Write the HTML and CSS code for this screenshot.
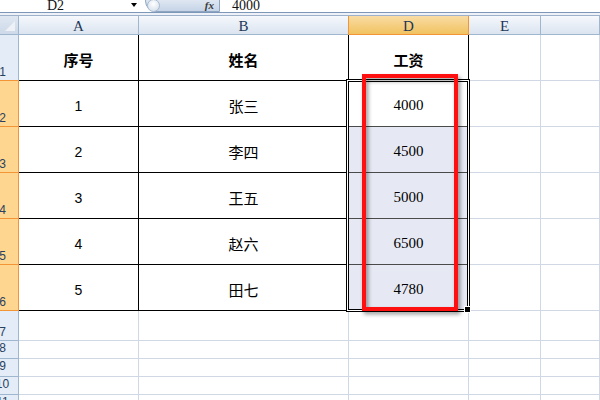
FILE: index.html
```html
<!DOCTYPE html>
<html lang="zh">
<head>
    <meta charset="UTF-8">
    <title>工资表</title>
    <link rel="stylesheet" href="styles.css">
</head>
<body>
    <div class="formula-bar">
        <div class="name-box">
            <span class="name">D2</span>
            <span class="drop"></span>
        </div>
        <div class="fx-btn">
            <span class="knob"></span>
            <span class="fx">fx</span>
        </div>
        <div class="formula">4000</div>
    </div>
    <div class="bar-gap"></div>

    <div class="sheet">
        <!-- 列标题 -->
        <div class="corner"><span class="tri"></span></div>
        <div class="ch">A</div>
        <div class="ch pre">B</div>
        <div class="ch on">D</div>
        <div class="ch">E</div>
        <div class="ch"></div>

        <!-- 第1行 表头 -->
        <div class="rh r1"><span>1</span></div>
        <div class="c t head">序号</div>
        <div class="c t head">姓名</div>
        <div class="c t head">工资</div>
        <div class="c"></div>
        <div class="c"></div>

        <div class="rh on"><span>2</span></div>
        <div class="c t num">1</div>
        <div class="c t">张三</div>
        <div class="c t d s0">4000</div>
        <div class="c"></div>
        <div class="c"></div>

        <div class="rh on"><span>3</span></div>
        <div class="c t num">2</div>
        <div class="c t">李四</div>
        <div class="c t d s">4500</div>
        <div class="c"></div>
        <div class="c"></div>

        <div class="rh on"><span>4</span></div>
        <div class="c t num">3</div>
        <div class="c t">王五</div>
        <div class="c t d s">5000</div>
        <div class="c"></div>
        <div class="c"></div>

        <div class="rh on"><span>5</span></div>
        <div class="c t num">4</div>
        <div class="c t">赵六</div>
        <div class="c t d s">6500</div>
        <div class="c"></div>
        <div class="c"></div>

        <div class="rh on"><span>6</span></div>
        <div class="c t num">5</div>
        <div class="c t">田七</div>
        <div class="c t d s last">4780</div>
        <div class="c"></div>
        <div class="c"></div>

        <!-- 空行 -->
        <div class="rh"><span>7</span></div>
        <div class="c"></div><div class="c"></div><div class="c"></div><div class="c"></div><div class="c"></div>

        <div class="rh short"><span>8</span></div>
        <div class="c"></div><div class="c"></div><div class="c"></div><div class="c"></div><div class="c"></div>

        <div class="rh short"><span>9</span></div>
        <div class="c"></div><div class="c"></div><div class="c"></div><div class="c"></div><div class="c"></div>

        <div class="rh short"><span>10</span></div>
        <div class="c"></div><div class="c"></div><div class="c"></div><div class="c"></div><div class="c"></div>

        <div class="rh short"><span>11</span></div>
        <div class="c"></div><div class="c"></div><div class="c"></div><div class="c"></div><div class="c"></div>

        <!-- 选区与标注 -->
        <div class="selection"></div>
        <div class="fill-handle"></div>
        <div class="mark"></div>
    </div>
</body>
</html>
```

FILE: styles.css
```css
* {
    box-sizing: border-box;
}
body {
    margin: 0;
    width: 600px;
    height: 400px;
    overflow: hidden;
    background-color: #fff;
    color: #000;
    font-family: "Liberation Sans", "Noto Sans CJK SC", sans-serif;
}

/* 编辑栏 */
.formula-bar {
    display: flex;
    align-items: flex-end;
    height: 13px;
    border-bottom: 1px solid #7c97b7;
    overflow: hidden;
    font-family: "Liberation Serif", serif;
    font-size: 14px;
    color: #111;
}
.name-box {
    display: flex;
    align-items: flex-end;
    width: 140px;
    height: 100%;
}
.name {
    padding-left: 47px;
    line-height: 13px;
}
.drop {
    align-self: flex-start;
    margin: 3px 3px 0 auto;
    width: 0;
    height: 0;
    border-left: 3.5px solid transparent;
    border-right: 3.5px solid transparent;
    border-top: 4px solid #000;
}
.fx-btn {
    display: flex;
    align-items: flex-end;
    flex-shrink: 0;
    margin-left: 5px;
    width: 75px;
    height: 22px;
    border: 1px solid #8ea5c2;
    border-radius: 11px 0 0 11px;
    background: linear-gradient(#f3f6fb, #c6d4e7);
}
.knob {
    width: 13px;
    height: 13px;
    margin: 0 0 -1px 1px;
    border-radius: 50%;
    border: 1px solid #a9b9ce;
    background: radial-gradient(circle at 50% 35%, #fff, #cfdbea);
}
.fx {
    margin: 0 5px 1px auto;
    font-style: italic;
    font-weight: bold;
    font-size: 11px;
    line-height: 10px;
    color: #3a3a3a;
}
.formula {
    padding-left: 12px;
    line-height: 13px;
}
.bar-gap {
    height: 2px;
    background-color: #eef2f8;
}

/* 工作表 */
.sheet {
    position: relative;
    display: grid;
    grid-template-columns: 19px 120px 210px 120px 72px 1fr;
    grid-template-rows: 19px repeat(6, 46px) 30px repeat(4, 18px);
    border-top: 1px solid #9db2ca;
}
.corner {
    display: flex;
    align-items: flex-end;
    justify-content: flex-end;
    padding: 0 3px 3px 0;
    background: linear-gradient(#dfe7f2, #cdd9e9);
    border-right: 1px solid #9eb6ce;
    border-bottom: 1px solid #9eb6ce;
}
.tri {
    width: 0;
    height: 0;
    border-left: 10px solid transparent;
    border-bottom: 10px solid #eef1f5;
}
.ch {
    display: flex;
    justify-content: center;
    align-items: center;
    padding-top: 2px;
    background: linear-gradient(#f5f8fc, #dbe4f0);
    border-right: 1px solid #9eb6ce;
    border-bottom: 1px solid #9eb6ce;
    font-family: "Liberation Serif", serif;
    font-size: 15px;
    color: #1d3856;
}
.ch.pre {
    border-right-color: #f29536;
}
.ch.on {
    background: linear-gradient(#f9dca4, #f1c260);
    border-right-color: #f29536;
    border-bottom-color: #f29536;
}
.rh {
    display: flex;
    align-items: flex-end;
    overflow: hidden;
    padding-bottom: 1px;
    background-color: #e4ecf7;
    border-right: 1px solid #9eb6ce;
    border-bottom: 1px solid #9eb6ce;
    font-size: 12px;
    color: #27415f;
}
.rh span {
    flex-shrink: 0;
    width: 36px;
    margin-left: -15.5px;
    text-align: center;
    line-height: 14px;
}
.rh.short {
    align-items: flex-start;
    padding: 0;
}
.rh.r1 {
    border-bottom-color: #f29536;
}
.rh.on {
    background-color: #fed68f;
    border-right-color: #f29536;
    border-bottom-color: #f29536;
}
.c {
    display: flex;
    justify-content: center;
    align-items: center;
    border-right: 1px solid #d0d7e5;
    border-bottom: 1px solid #d0d7e5;
    font-size: 15px;
}
.t {
    padding-top: 4px;
    border-right-color: #000;
    border-bottom-color: #000;
}
.head {
    font-weight: bold;
}
.num {
    font-size: 14px;
}
.d {
    font-family: "Liberation Serif", serif;
    font-size: 15px;
}
.s0 {
    border-bottom-color: #4a4a4a;
}
.s {
    background-color: #e6e9f4;
    border-bottom-color: #4a4a4a;
}
.s.last {
    border-bottom-color: #000;
}

/* 选区框 */
.selection {
    position: absolute;
    left: 346px;
    top: 63px;
    width: 124px;
    height: 233px;
    border: 1px solid #000;
    box-shadow: inset 0 0 0 1px #fff, inset 0 0 0 2px #000;
}
.fill-handle {
    position: absolute;
    left: 464px;
    top: 290px;
    width: 7px;
    height: 7px;
    background-color: #000;
    border: 1px solid #fff;
}

/* 红色标注框 */
.mark {
    position: absolute;
    left: 362px;
    top: 58px;
    width: 96px;
    height: 237px;
    border: 4px solid #ff1010;
    filter: drop-shadow(2px 3px 2px rgba(0, 0, 0, 0.45));
}
```
